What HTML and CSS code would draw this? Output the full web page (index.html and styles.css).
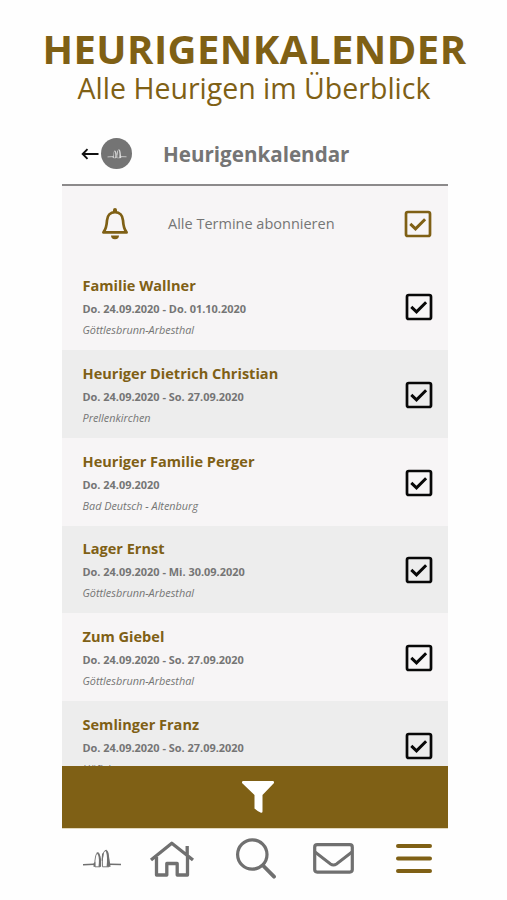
FILE: index.html
```
<!DOCTYPE html>
<html lang="de">
<head>
	<meta charset="utf-8" />
	<title>Heurigenkalender</title>
	<link rel="stylesheet" href="styles.css">
</head>
<body>
<svg class="defs">
	<symbol id="check" viewBox="0 0 28 28">
		<rect x="2" y="2" width="24" height="24" rx="1.8" fill="none" stroke="currentColor" stroke-width="2.7"/>
		<path d="M6.3 13.9l5.2 4.9 9.6-9.5" fill="none" stroke="currentColor" stroke-width="3"/>
	</symbol>
	<symbol id="stones" viewBox="0 0 40 20">
		<path d="M1 15.800l11-.6M28 15.200l11 .4" fill="none" stroke="currentColor" stroke-width="1.5"/>
		<path d="M13 17.800q-.6-6 .7-11 1-3.500 2.600-3.200 1.400.5 1.800 14.200zM20.500 17.800q-.8-9 1-14 1.300-3 3-2.600 2 .6 2.400 16.600z" fill="none" stroke="currentColor" stroke-width=".9"/>
		<path d="M14.500 3.500q2.500-.4 3.400 2.500 1.500 2 1.200 11.800h-2.600q1-8-.3-11.500zM23 1q3.200 0 3.700 4.500l1.900 12.300h-4q1-10-.4-14.300zM11.500 14.500l1.800-2v5.300h-1.800zM20 5l1.600-1.800-.8 8.500h-1.200z" fill="currentColor"/>
	</symbol>
</svg>

<header class="promo">
	<h1>HEURIGENKALENDER</h1>
	<h2>Alle Heurigen im Überblick</h2>
</header>

<main class="app">
	<div class="topbar">
		<svg class="back" viewBox="0 0 18 12"><path d="M17.5 6H2M6.5 1.2L1.7 6l4.800 4.800" fill="none" stroke="currentColor" stroke-width="1.9"/></svg>
		<span class="avatar"><svg><use href="#stones"/></svg></span>
		<h3>Heurigenkalendar</h3>
	</div>

	<div class="subscribe">
		<svg class="bell" viewBox="0 0 28 32">
			<path d="M14 4.2c-4.700 0-7.700 3.300-8 8.200-.3 5.500-.8 8.500-3.600 12h23.200c-2.800-3.500-3.300-6.500-3.600-12-.3-4.900-3.300-8.200-8-8.200z" fill="none" stroke="currentColor" stroke-width="2.7" stroke-linejoin="round"/>
			<path d="M12 4V2a2 2 0 0 1 4 0v2zM10 27.6h8a4 3.700 0 0 1-8 0z" fill="currentColor"/>
		</svg>
		<span>Alle Termine abonnieren</span>
		<svg class="check"><use href="#check"/></svg>
	</div>

	<ul class="list">
		<li>
			<div>
				<h4>Familie Wallner</h4>
				<p class="date">Do. 24.09.2020 - Do. 01.10.2020</p>
				<p class="place">Göttlesbrunn-Arbesthal</p>
			</div>
			<svg class="check"><use href="#check"/></svg>
		</li>
		<li>
			<div>
				<h4>Heuriger Dietrich Christian</h4>
				<p class="date">Do. 24.09.2020 - So. 27.09.2020</p>
				<p class="place">Prellenkirchen</p>
			</div>
			<svg class="check"><use href="#check"/></svg>
		</li>
		<li>
			<div>
				<h4>Heuriger Familie Perger</h4>
				<p class="date">Do. 24.09.2020</p>
				<p class="place">Bad Deutsch - Altenburg</p>
			</div>
			<svg class="check"><use href="#check"/></svg>
		</li>
		<li>
			<div>
				<h4>Lager Ernst</h4>
				<p class="date">Do. 24.09.2020 - Mi. 30.09.2020</p>
				<p class="place">Göttlesbrunn-Arbesthal</p>
			</div>
			<svg class="check"><use href="#check"/></svg>
		</li>
		<li>
			<div>
				<h4>Zum Giebel</h4>
				<p class="date">Do. 24.09.2020 - So. 27.09.2020</p>
				<p class="place">Göttlesbrunn-Arbesthal</p>
			</div>
			<svg class="check"><use href="#check"/></svg>
		</li>
		<li>
			<div>
				<h4>Semlinger Franz</h4>
				<p class="date">Do. 24.09.2020 - So. 27.09.2020</p>
				<p class="place">Höflein</p>
			</div>
			<svg class="check"><use href="#check"/></svg>
		</li>
	</ul>

	<div class="filter">
		<svg viewBox="0 0 32 32"><path d="M1.200 0h29.600q1.200 0 1.200 1.200v.8L20.500 14v16.500q0 1.500-1.500 1.300-3.500-1.500-6.500-4.300V14L0 2v-.8Q0 0 1.200 0z" fill="currentColor"/></svg>
	</div>

	<nav class="tabs">
		<svg class="logo"><use href="#stones"/></svg>
		<svg class="home" viewBox="0 0 46 36">
			<path d="M2 19L22.800 2.200 44 19M7.500 16v18h10.300V22.500h10.400V34h10.300V15.500M38.200 14V5" fill="none" stroke="currentColor" stroke-width="3.3" stroke-linejoin="round"/>
		</svg>
		<svg class="search" viewBox="0 0 40 41">
			<circle cx="16.300" cy="16.500" r="14.700" fill="none" stroke="currentColor" stroke-width="3.2"/>
			<path d="M27 27.500l11 11.200" stroke="currentColor" stroke-width="3.8" stroke-linecap="round"/>
		</svg>
		<svg class="mail" viewBox="0 0 41 31">
			<rect x="1.700" y="1.700" width="37.600" height="27.400" rx="2.500" fill="none" stroke="currentColor" stroke-width="3.2"/>
			<path d="M2 9l15.500 12q3 2.200 6 0L39 9" fill="none" stroke="currentColor" stroke-width="2.9"/>
		</svg>
		<svg class="menu" viewBox="0 0 36 31">
			<path d="M2 3h32M2 15.500h32M2 28h32" stroke="currentColor" stroke-width="4" stroke-linecap="round"/>
		</svg>
	</nav>
</main>
</body>
</html>
```

FILE: styles.css
```
*{
	box-sizing:border-box;
	margin:0;
	padding:0;
}

body{
	width:507px;
	height:900px;
	overflow:hidden;
	background:#fefefe;
	color:#757575;
	font-family:"Open Sans", sans-serif;
	white-space:nowrap;
}

svg{
	display:block;
	flex:none;
}

.defs{
	width:0;
	height:0;
}

.promo{
	height:122px;
	padding:28px 0 0 2px;
	text-align:center;
	color:#7f6015;
}

h1{
	font-size:40px;
	line-height:42px;
	font-weight:700;
	letter-spacing:.45px;
}

h2{
	margin-top:1px;
	padding-right:1px;
	font-size:28.5px;
	line-height:34px;
	font-weight:400;
}

.app{
	width:386px;
	margin-left:62px;
}

.topbar{
	display:flex;
	align-items:center;
	height:64px;
	padding:1px 0 0 19px;
	border-bottom:2px solid #8c8a8b;
}

.back{
	width:18px;
	height:12px;
	color:#111;
}

.avatar{
	display:flex;
	align-items:center;
	justify-content:center;
	width:31px;
	height:31px;
	margin:0 31px 0 2px;
	border-radius:50%;
	background:#747474;
	color:#ddd;
}

.avatar svg{
	width:20px;
	height:10px;
}

h3{
	font-size:20.6px;
	font-weight:700;
}

.subscribe{
	display:flex;
	align-items:center;
	height:76.5px;
	padding:0 16px 1px 38.5px;
	background:#f7f5f6;
	font-size:14.5px;
}

.subscribe span{
	flex:1;
	margin:0 0 1px 39.5px;
}

.bell{
	width:28px;
	height:32px;
}

.bell, .subscribe .check{
	color:#7f6015;
}

.check{
	width:28px;
	height:28px;
}

.list{
	height:503.5px;
	overflow:hidden;
	list-style:none;
}

.list li{
	display:flex;
	align-items:center;
	justify-content:space-between;
	height:87.7px;
	padding:2px 15px 0 20.5px;
	background:#f7f5f6;
	color:#080808;
}

.list li:nth-child(even){
	background:#ededed;
}

h4{
	padding-bottom:2px;
	font-size:14.55px;
	line-height:22px;
	font-weight:700;
	color:#7f6015;
}

.date{
	font-size:10.95px;
	line-height:22px;
	font-weight:700;
	color:#757575;
}

.place{
	font-size:10.85px;
	line-height:20px;
	font-style:italic;
	color:#757575;
}

.filter{
	display:flex;
	align-items:center;
	justify-content:center;
	height:63px;
	padding:0 0 1px 6px;
	border-bottom:1px solid #e3d9bd;
	background:#7f6015;
	color:#fff;
}

.filter svg{
	width:32px;
	height:32px;
}

.tabs{
	display:flex;
	align-items:center;
	height:60px;
	padding:0 0 1px 20px;
	color:#707070;
}

.logo{
	width:40px;
	height:20px;
}

.home{
	width:46px;
	height:36px;
	margin-left:27px;
}

.search{
	width:40px;
	height:41px;
	margin-left:41px;
}

.mail{
	width:41px;
	height:31px;
	margin-left:37px;
}

.menu{
	width:36px;
	height:31px;
	margin-left:42px;
	color:#7f6015;
}
```
